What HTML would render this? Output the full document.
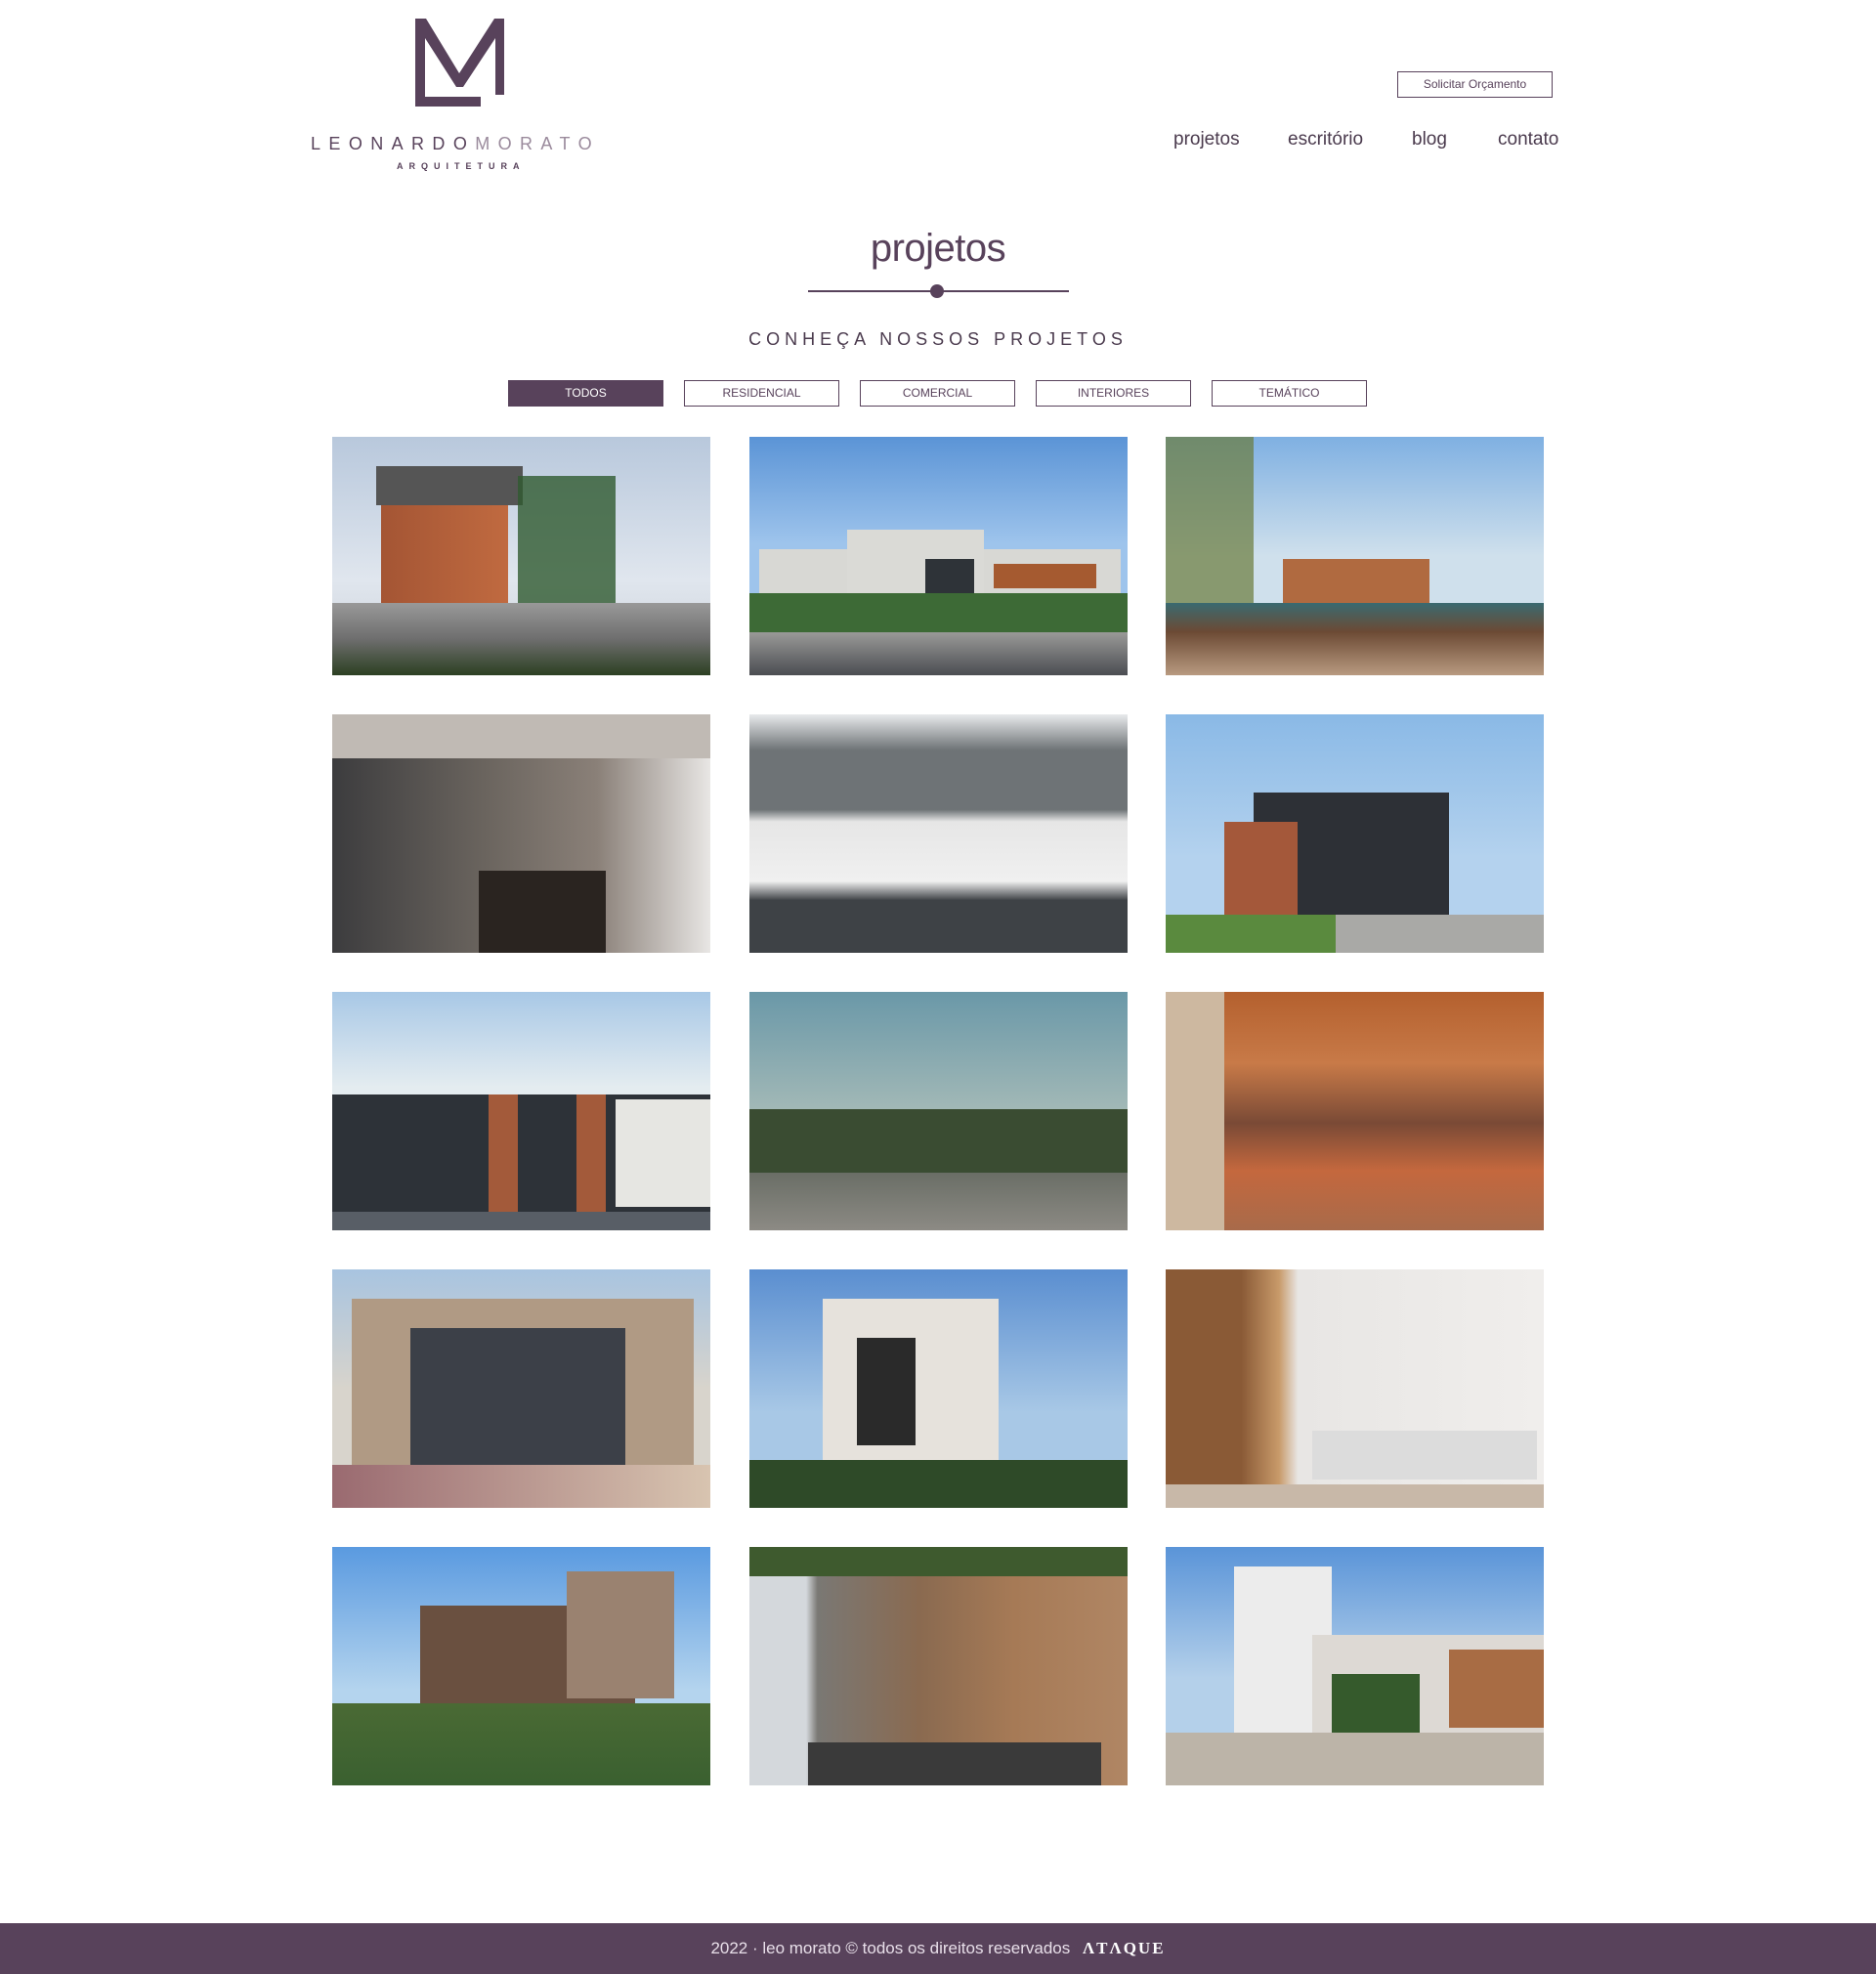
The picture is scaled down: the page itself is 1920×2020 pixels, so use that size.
<!DOCTYPE html>
<html><head><meta charset="utf-8"><style>
*{margin:0;padding:0;box-sizing:border-box}
body{width:1920px;height:2020px;background:#fff;position:relative;font-family:"Liberation Sans",sans-serif;color:#58425b;overflow:hidden}
.abs{position:absolute}
.logoM{left:425px;top:19px;width:91px;height:90px}
.brand{left:318px;top:137px;width:304px;font-size:18px;letter-spacing:8.4px;white-space:nowrap;color:#58425b}
.brand span{color:#9a8a9c}
.arq{left:406px;top:165px;width:132px;font-size:9px;letter-spacing:6px;font-weight:bold;white-space:nowrap}
.btn{left:1430px;top:73px;width:159px;height:27px;border:1.5px solid #58425b;font-size:12px;text-align:center;line-height:24px;color:#58425b}
.nav{top:132px;font-size:19px;color:#4a3a4d}
h1{position:absolute;left:0;width:1920px;top:232px;text-align:center;font-weight:normal;font-size:40px;color:#58425b;letter-spacing:-0.5px}
.line{left:827px;top:297px;width:267px;height:2px;background:#58425b}
.dot{left:952px;top:291px;width:14px;height:14px;border-radius:50%;background:#58425b}
.sub{left:0;width:1920px;top:337px;text-align:center;font-size:18px;letter-spacing:5px;color:#4a3a4d}
.f{top:389px;width:159px;height:27px;border:1.5px solid #58425b;font-size:12px;text-align:center;line-height:24px;color:#58425b}
.f.on{background:#58425b;color:#fff}
.im{width:387px;height:244px;overflow:hidden}
.im div{position:absolute}
.foot{left:0;top:1968px;width:1920px;height:52px;background:#58425b;color:#e8dfe9;font-size:17px;text-align:center;line-height:52px}
.foot b{color:#fff;letter-spacing:2px;margin-left:8px;font-family:"Liberation Serif",serif}
</style></head><body>
<svg class="abs logoM" viewBox="0 0 91 90"><path d="M0 0H11L45 56L81 0H91V78H82V20L49 70H42L10 20V80H67V90H0Z" fill="#58425b"/></svg>
<div class="abs brand">LEONARDO<span>MORATO</span></div>
<div class="abs arq">ARQUITETURA</div>
<div class="abs btn">Solicitar Orçamento</div>
<div class="abs nav" style="left:1201px">projetos</div>
<div class="abs nav" style="left:1318px">escritório</div>
<div class="abs nav" style="left:1445px">blog</div>
<div class="abs nav" style="left:1533px">contato</div>
<h1>projetos</h1>
<div class="abs line"></div><div class="abs dot"></div>
<div class="abs sub">CONHEÇA NOSSOS PROJETOS</div>
<div class="abs f on" style="left:520px">TODOS</div>
<div class="abs f" style="left:700px">RESIDENCIAL</div>
<div class="abs f" style="left:880px">COMERCIAL</div>
<div class="abs f" style="left:1060px">INTERIORES</div>
<div class="abs f" style="left:1240px">TEMÁTICO</div>

<div class="abs im" style="left:340px;top:447px;background:linear-gradient(#b8c8dc,#e0e6ee 60%,#c9cfd6)">
<div style="left:45px;top:30px;width:150px;height:40px;background:#555"></div>
<div style="left:50px;top:70px;width:130px;height:110px;background:linear-gradient(90deg,#a45534,#c06a40)"></div>
<div style="left:190px;top:40px;width:100px;height:150px;background:#2f5a30;opacity:.8"></div>
<div style="left:0;top:170px;width:387px;height:74px;background:linear-gradient(#999,#6e6e6e 50%,#2c4022)"></div></div>
<div class="abs im" style="left:767px;top:447px;background:linear-gradient(#5b94d6,#9ec4ec 45%)">
<div style="left:10px;top:115px;width:370px;height:60px;background:#d8d8d4"></div>
<div style="left:100px;top:95px;width:140px;height:80px;background:#dadad6"></div>
<div style="left:180px;top:125px;width:50px;height:60px;background:#2e3338"></div>
<div style="left:250px;top:130px;width:105px;height:25px;background:#a55a30"></div>
<div style="left:0;top:160px;width:387px;height:40px;background:#3d6a36"></div>
<div style="left:0;top:200px;width:387px;height:44px;background:linear-gradient(#9a9a98,#4b4d52)"></div></div>
<div class="abs im" style="left:1193px;top:447px;background:linear-gradient(#7fb0e2,#cfe0ec 50%)">
<div style="left:0;top:0;width:90px;height:200px;background:#6a7a3a;opacity:.7"></div>
<div style="left:120px;top:125px;width:150px;height:60px;background:#b06a40"></div>
<div style="left:0;top:170px;width:387px;height:74px;background:linear-gradient(#3a6a70,#6c4a34 40%,#b89a80)"></div></div>
<div class="abs im" style="left:340px;top:731px;background:linear-gradient(90deg,#3c3c3e,#6a645e 40%,#8a8078 70%,#e8e6e4)">
<div style="left:0;top:0;width:387px;height:45px;background:#c0bab4"></div>
<div style="left:150px;top:160px;width:130px;height:84px;background:#2a2420"></div></div>
<div class="abs im" style="left:767px;top:731px;background:linear-gradient(#e8eaec,#6e7376 15%,#6e7376 40%,#e6e6e6 45%,#f0f0f0 70%,#3e4246 78%)"></div>
<div class="abs im" style="left:1193px;top:731px;background:linear-gradient(#8ab9e6,#b4d2ee 60%)">
<div style="left:90px;top:80px;width:200px;height:130px;background:#2d3036"></div>
<div style="left:60px;top:110px;width:75px;height:100px;background:#a4583a"></div>
<div style="left:0;top:205px;width:387px;height:39px;background:linear-gradient(90deg,#5a8a3e 45%,#a9a9a6 45%)"></div></div>
<div class="abs im" style="left:340px;top:1015px;background:linear-gradient(#a8c8e6,#e4ecf0 40%)">
<div style="left:0;top:105px;width:387px;height:120px;background:#2d3238"></div>
<div style="left:160px;top:105px;width:30px;height:120px;background:#a35a3a"></div>
<div style="left:250px;top:105px;width:30px;height:120px;background:#a35a3a"></div>
<div style="left:290px;top:110px;width:97px;height:110px;background:#e6e6e2"></div>
<div style="left:0;top:225px;width:387px;height:19px;background:#585e66"></div></div>
<div class="abs im" style="left:767px;top:1015px;background:linear-gradient(#6a98a8,#a8bcb8 55%)">
<div style="left:0;top:120px;width:387px;height:70px;background:#3a4c32"></div>
<div style="left:0;top:185px;width:387px;height:59px;background:linear-gradient(#6a6e66,#8c8a84)"></div></div>
<div class="abs im" style="left:1193px;top:1015px;background:linear-gradient(#b4602e,#c87a48 30%,#7a4a36 55%,#c4683e 75%,#a86a4a)">
<div style="left:0;top:0;width:60px;height:244px;background:#cdb8a0"></div></div>
<div class="abs im" style="left:340px;top:1299px;background:linear-gradient(#a8c4e0,#d8d4cc 50%)">
<div style="left:20px;top:30px;width:350px;height:170px;background:#b09a84"></div>
<div style="left:80px;top:60px;width:220px;height:140px;background:#3c4048"></div>
<div style="left:0;top:200px;width:387px;height:44px;background:linear-gradient(90deg,#9a6a70,#d8c4b0)"></div></div>
<div class="abs im" style="left:767px;top:1299px;background:linear-gradient(#5a8ed0,#a8c8e6 60%)">
<div style="left:75px;top:30px;width:180px;height:180px;background:#e6e2dc"></div>
<div style="left:110px;top:70px;width:60px;height:110px;background:#2a2a2a"></div>
<div style="left:0;top:195px;width:387px;height:49px;background:#2e4a28"></div></div>
<div class="abs im" style="left:1193px;top:1299px;background:linear-gradient(90deg,#8a5a36 20%,#c89a6a 30%,#e8e6e4 35%,#f0eeec)">
<div style="left:150px;top:165px;width:230px;height:50px;background:#dcdcdc"></div>
<div style="left:0;top:220px;width:387px;height:24px;background:#c8b8a8"></div></div>
<div class="abs im" style="left:1193px;top:1583px;background:linear-gradient(#5a94d8,#b4d0ea 55%)">
<div style="left:70px;top:20px;width:100px;height:170px;background:#ececec"></div>
<div style="left:150px;top:90px;width:237px;height:100px;background:#ddd9d4"></div>
<div style="left:290px;top:105px;width:97px;height:80px;background:#a86c44"></div>
<div style="left:170px;top:130px;width:90px;height:70px;background:#355a2c"></div>
<div style="left:0;top:190px;width:387px;height:54px;background:#bcb4a8"></div></div>
<div class="abs im" style="left:340px;top:1583px;background:linear-gradient(#5a9ae0,#b4d4ee 60%)">
<div style="left:90px;top:60px;width:220px;height:110px;background:#6a5040"></div>
<div style="left:240px;top:25px;width:110px;height:130px;background:#9a8270"></div>
<div style="left:0;top:160px;width:387px;height:84px;background:linear-gradient(#4a6a34,#3a6030)"></div></div>
<div class="abs im" style="left:767px;top:1583px;background:linear-gradient(90deg,#d4d8dc 15%,#7a7874 18%,#8a6a50 45%,#a67a56 70%,#b08664)">
<div style="left:0;top:0;width:387px;height:30px;background:#3e5a2e"></div>
<div style="left:60px;top:200px;width:300px;height:44px;background:#3a3a3a"></div></div>

<div class="abs foot">2022 · leo morato © todos os direitos reservados <b>ΛTΛQUE</b></div>
</body></html>
